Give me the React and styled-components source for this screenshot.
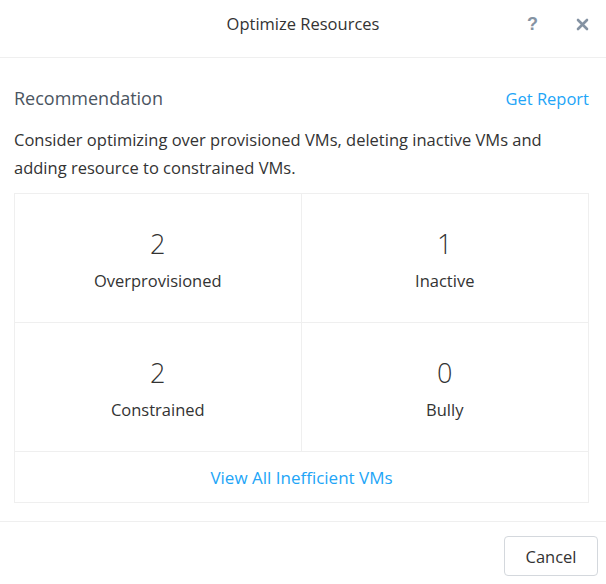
import React from 'react';
import styled, { createGlobalStyle } from 'styled-components';

const Global = createGlobalStyle`
  html, body {
    margin: 0;
    padding: 0;
    background: #fff;
  }
  body {
    font-family: "Open Sans", "Liberation Sans", sans-serif;
    color: #333;
  }
`;

const Dialog = styled.div`
  width: 606px;
  height: 584px;
  display: flex;
  flex-direction: column;
  background: #fff;
`;

const Header = styled.header`
  height: 57px;
  border-bottom: 1px solid #efefef;
  display: flex;
  align-items: center;
  justify-content: center;
  position: relative;
  h1 {
    margin: 0 0 10px;
    font-size: 16.5px;
    font-weight: 400;
    color: #333;
  }
`;

const HeaderIcons = styled.div`
  position: absolute;
  right: 17px;
  top: 0;
  height: 48px;
  display: flex;
  align-items: center;
  gap: 38px;
  color: #8593a3;
`;

const IconButton = styled.span`
  display: flex;
  align-items: center;
  justify-content: center;
  font-family: "Liberation Sans", sans-serif;
  font-weight: 700;
  font-size: 18px;
  cursor: pointer;
`;

const Body = styled.section`
  flex: 1;
  padding: 28px 17px 0 14px;
`;

const TitleRow = styled.div`
  display: flex;
  justify-content: space-between;
  align-items: baseline;
  h2 {
    margin: 0;
    font-size: 18px;
    font-weight: 400;
    color: #4b5561;
  }
`;

const Link = styled.a`
  color: #22a5f7;
  font-size: ${p => (p.$big ? '17px' : '16.5px')};
  text-decoration: none;
  cursor: pointer;
`;

const Description = styled.p`
  margin: 16px 0 11px;
  font-size: 16.5px;
  line-height: 28px;
  color: #333;
`;

const Summary = styled.div`
  border: 1px solid #efefef;
`;

const Grid = styled.div`
  display: grid;
  grid-template-columns: 1fr 1fr;
`;

const Cell = styled.div`
  height: 128px;
  display: flex;
  flex-direction: column;
  align-items: center;
  justify-content: center;
  border-bottom: 1px solid #efefef;
  border-right: ${p => (p.$right ? 'none' : '1px solid #efefef')};
  .count {
    font-size: 27px;
    font-weight: 300;
    color: #333;
    line-height: 38px;
  }
  .label {
    margin-top: 6px;
    font-size: 16.5px;
    color: #333;
  }
`;

const LinkRow = styled.div`
  height: 50px;
  display: flex;
  align-items: center;
  justify-content: center;
`;

const Footer = styled.footer`
  height: 62px;
  border-top: 1px solid #efefef;
  background: #fff;
  display: flex;
  align-items: center;
  justify-content: flex-end;
  padding-right: 8px;
`;

const Button = styled.button`
  height: 40px;
  width: 94px;
  margin-top: 6px;
  border: 1px solid #d4d8dd;
  border-radius: 4px;
  background: #fff;
  font-family: inherit;
  font-size: 16.5px;
  color: #333;
  cursor: pointer;
`;

const stats = [
  { count: 2, label: 'Overprovisioned' },
  { count: 1, label: 'Inactive' },
  { count: 2, label: 'Constrained' },
  { count: 0, label: 'Bully' }
];

const App = () => {
  return (
    <Dialog>
      <Global />
      <Header>
        <h1>Optimize Resources</h1>
        <HeaderIcons>
          <IconButton>?</IconButton>
          <IconButton>
            <svg width="13" height="13" viewBox="0 0 13 13">
              <path
                d="M2 2 L11 11 M11 2 L2 11"
                stroke="currentColor"
                strokeWidth="2.6"
                strokeLinecap="round"
              />
            </svg>
          </IconButton>
        </HeaderIcons>
      </Header>
      <Body>
        <TitleRow>
          <h2>Recommendation</h2>
          <Link>Get Report</Link>
        </TitleRow>
        <Description>
          Consider optimizing over provisioned VMs, deleting inactive VMs and
          adding resource to constrained VMs.
        </Description>
        <Summary>
          <Grid>
            {stats.map((s, i) => (
              <Cell key={s.label} $right={i % 2 === 1}>
                <span className="count">{s.count}</span>
                <span className="label">{s.label}</span>
              </Cell>
            ))}
          </Grid>
          <LinkRow>
            <Link $big>View All Inefficient VMs</Link>
          </LinkRow>
        </Summary>
      </Body>
      <Footer>
        <Button>Cancel</Button>
      </Footer>
    </Dialog>
  );
};

export default App;
